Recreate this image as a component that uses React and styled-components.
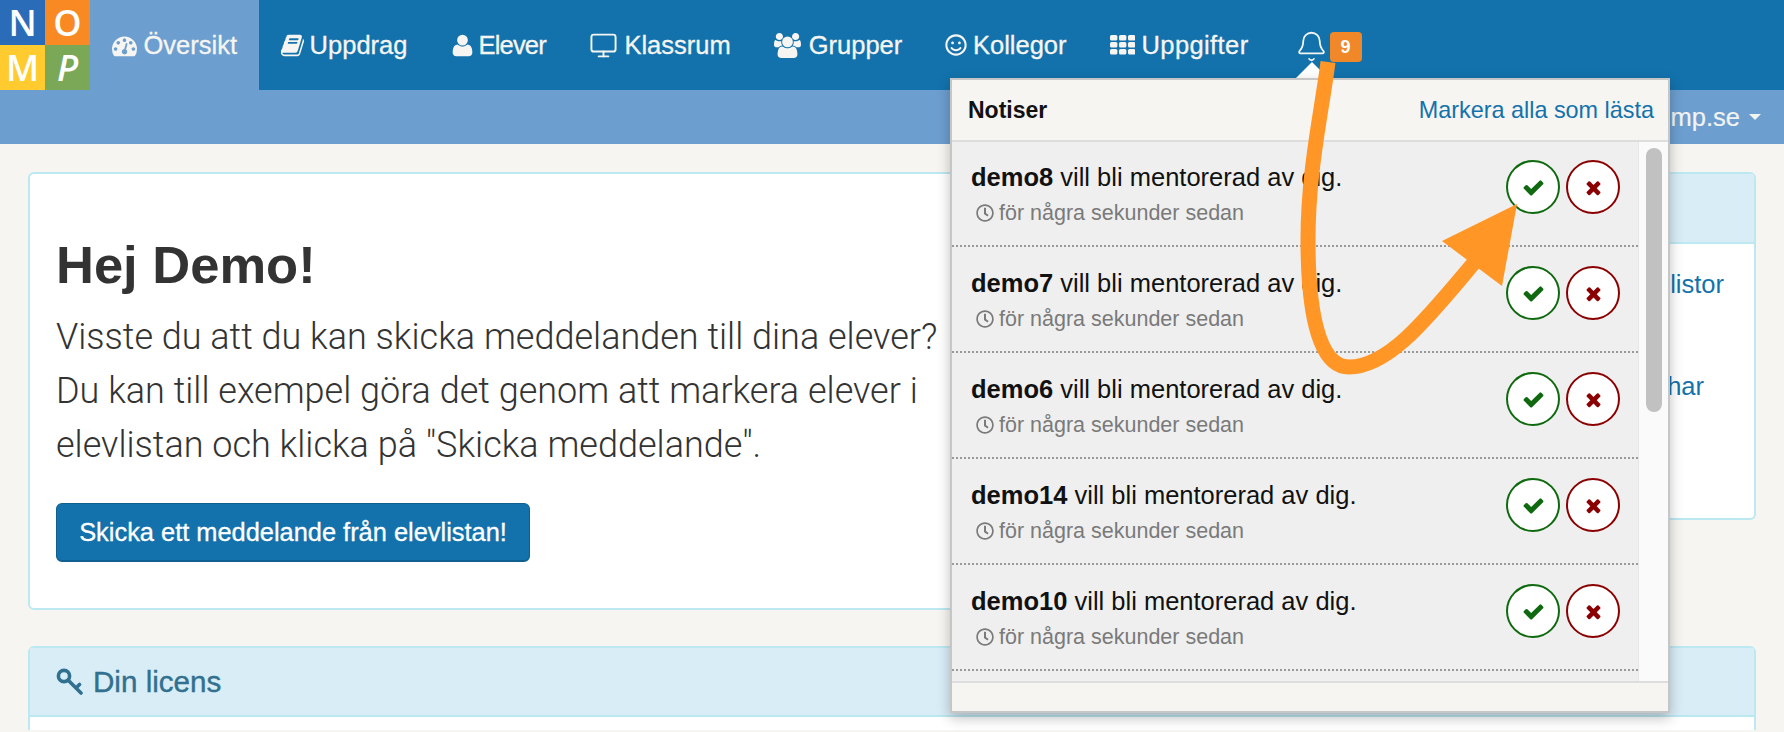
import styled, { createGlobalStyle } from 'styled-components';
import { FaRegSmile, FaRegClock } from 'react-icons/fa';
import { Monitor, Bell } from 'lucide-react';

const GlobalStyle = createGlobalStyle`
    html, body {
        margin: 0;
        height: 732px;
        overflow: hidden;
    }
    body {
        background: #f6f5f1;
        font-family: "Liberation Sans", Arial, sans-serif;
        color: #333;
    }
`;

const paths = {
    dashboard: 'M384 1152q0-53-37.5-90.5t-90.5-37.5-90.5 37.5-37.5 90.5 37.5 90.5 90.5 37.5 90.5-37.5 37.5-90.5zm192-448q0-53-37.5-90.5t-90.5-37.5-90.5 37.5-37.5 90.5 37.5 90.5 90.5 37.5 90.5-37.5 37.5-90.5zm428 481l101-382q6-26-7.5-48.5t-38.5-29.5-48 6.5-30 39.5l-101 382q-60 5-107 43.5t-63 98.5q-20 77 20 146t117 89 146-20 89-117q16-60-6-117t-72-91zm660-33q0-53-37.5-90.5t-90.5-37.5-90.5 37.5-37.5 90.5 37.5 90.5 90.5 37.5 90.5-37.5 37.5-90.5zm-640-640q0-53-37.5-90.5t-90.5-37.5-90.5 37.5-37.5 90.5 37.5 90.5 90.5 37.5 90.5-37.5 37.5-90.5zm448 192q0-53-37.5-90.5t-90.5-37.5-90.5 37.5-37.5 90.5 37.5 90.5 90.5 37.5 90.5-37.5 37.5-90.5zm320 448q0 261-141 483-19 29-54 29h-1402q-35 0-54-29-141-221-141-483 0-182 71-348t191-286 286-191 348-71 348 71 286 191 191 286 71 348z',
    book: 'M1703 478q40 57 18 129l-275 906q-19 64-76.5 107.5t-122.5 43.5h-923q-77 0-148.5-53.5t-99.5-131.5q-24-67-2-127 0-4 3-27t4-37q1-8-3-21.5t-3-19.5q2-11 8-21t16.5-23.5 16.5-23.5q23-38 45-91.5t30-91.5q3-10 .5-30t-.5-28q3-11 17-28t17-23q21-36 42-92t25-90q1-9-2.5-32t.5-28q4-13 22-30.5t22-22.5q19-26 42.5-84.5t27.5-96.5q1-8-3-25.5t-2-26.5q2-8 9-18t18-23 17-21q8-12 16.5-30.5t15-35 16-36 19.5-32 26.5-23.5 36-11.5 47.5 5.5l-1 3q38-9 51-9h761q74 0 114 56t18 130l-274 906q-36 119-71.5 153.5t-128.5 34.5h-869q-27 0-38 15-11 16-1 43 24 70 144 70h923q29 0 56-15.5t35-41.5l300-987q7-22 5-57 38 15 59 43zm-1064 2q-4 13 2 22.5t20 9.5h608q13 0 25.5-9.5t16.5-22.5l21-64q4-13-2-22.5t-20-9.5h-608q-13 0-25.5 9.5t-16.5 22.5zm-83 256q-4 13 2 22.5t20 9.5h608q13 0 25.5-9.5t16.5-22.5l21-64q4-13-2-22.5t-20-9.5h-608q-13 0-25.5 9.5t-16.5 22.5z',
    user: 'M1600 1405q0 120-73 189.5t-194 69.5h-874q-121 0-194-69.5t-73-189.5q0-53 3.5-103.5t14-109 26.5-108.5 43-97.5 62-81 85.5-53.5 111.5-20q9 0 42 21.5t74.5 48 108 48 133.5 21.5 133.5-21.5 108-48 74.5-48 42-21.5q61 0 111.5 20t85.5 53.5 62 81 43 97.5 26.5 108.5 14 109 3.5 103.5zm-320-893q0 159-112.5 271.5t-271.5 112.5-271.5-112.5-112.5-271.5 112.5-271.5 271.5-112.5 271.5 112.5 112.5 271.5z',
    users: 'M593 896q-162 5-265 128h-134q-82 0-138-40.5t-56-118.5q0-353 124-353 6 0 43.5 21t97.5 42.5 119 21.5q67 0 133-23-5 37-5 66 0 139 81 256zm1071 637q0 120-73 189.5t-194 69.5h-874q-121 0-194-69.5t-73-189.5q0-53 3.5-103.5t14-109 26.5-108.5 43-97.5 62-81 85.5-53.5 111.5-20q10 0 43 21.5t73 48 107 48 135 21.5 135-21.5 107-48 73-48 43-21.5q61 0 111.5 20t85.5 53.5 62 81 43 97.5 26.5 108.5 14 109 3.5 103.5zm-1024-1277q0 106-75 181t-181 75-181-75-75-181 75-181 181-75 181 75 75 181zm704 384q0 159-112.5 271.5t-271.5 112.5-271.5-112.5-112.5-271.5 112.5-271.5 271.5-112.5 271.5 112.5 112.5 271.5zm576 225q0 78-56 118.5t-138 40.5h-134q-103-123-265-128 81-117 81-256 0-29-5-66 66 23 133 23 59 0 119-21.5t97.5-42.5 43.5-21q124 0 124 353zm-128-609q0 106-75 181t-181 75-181-75-75-181 75-181 181-75 181 75 75 181z',
    check: 'M1671 566q0 40-28 68l-724 724-136 136q-28 28-68 28t-68-28l-136-136-362-362q-28-28-28-68t28-68l136-136q28-28 68-28t68 28l294 295 656-657q28-28 68-28t68 28l136 136q28 28 28 68z',
    times: 'M1490 1322q0 40-28 68l-136 136q-28 28-68 28t-68-28l-294-294-294 294q-28 28-68 28t-68-28l-136-136q-28-28-28-68t28-68l294-294-294-294q-28-28-28-68t28-68l136-136q28-28 68-28t68 28l294 294 294-294q28-28 68-28t68 28l136 136q28 28 28 68t-28 68l-294 294 294 294q28 28 28 68z',
};

function FaPath({ name, size, wide }) {
    return (
        <svg width={size} height={size} viewBox={wide ? '0 0 1920 1792' : '0 0 1792 1792'} fill="currentColor">
            <path d={paths[name]} />
        </svg>
    );
}

function GridIcon() {
    const cells = [];
    for (let row = 0; row < 3; row++) {
        for (let col = 0; col < 3; col++) {
            cells.push(<rect key={`${row}-${col}`} x={col * 9} y={row * 7} width="7.4" height="5.6" rx="1.6" />);
        }
    }
    return (
        <svg width="25.4" height="19.6" viewBox="0 0 25.4 19.6" fill="currentColor">{cells}</svg>
    );
}

function KeyIcon() {
    return (
        <svg width="27" height="27" viewBox="0 0 27 27" fill="none" stroke="currentColor" strokeWidth="3.6" strokeLinecap="round">
            <circle cx="8" cy="8" r="5.6" />
            <path d="M12 12 L25 25 M20 20 L23.5 16.5" />
        </svg>
    );
}

const navItems = [
    { label: 'Översikt', icon: <FaPath name="dashboard" size={25} />, gap: 7, active: true },
    { label: 'Uppdrag', icon: <FaPath name="book" size={25} />, gap: 4.6 },
    { label: 'Elever', icon: <FaPath name="user" size={25} />, gap: 3, track: -0.8 },
    { label: 'Klassrum', icon: <Monitor size={29} strokeWidth={1.6} />, gap: 6.5 },
    { label: 'Grupper', icon: <FaPath name="users" size={27} wide />, gap: 8 },
    { label: 'Kollegor', icon: <FaRegSmile size={22} />, gap: 5.7 },
    { label: 'Uppgifter', icon: <GridIcon />, gap: 6.6, track: 0.4 },
];

const notices = ['demo8', 'demo7', 'demo6', 'demo14', 'demo10'];

function App() {
    return (
        <>
            <GlobalStyle />
            <TopBar>
                <Logo>
                    <LogoCell $bg="#2b6cb8">N</LogoCell>
                    <LogoCell $bg="#f98a23">O</LogoCell>
                    <LogoCell $bg="#ffcb2e">M</LogoCell>
                    <LogoCell $bg="#7aa857" $italic>P</LogoCell>
                </Logo>
                {navItems.map((item) => (
                    <NavItem key={item.label} $active={item.active} $gap={item.gap} $track={item.track}>
                        {item.icon}
                        {item.label}
                    </NavItem>
                ))}
                <BellItem>
                    <Bell size={33} strokeWidth={1.3} />
                    <Badge>9</Badge>
                </BellItem>
            </TopBar>
            <SubBar>
                <UserName>mp.se</UserName>
                <Caret />
            </SubBar>
            <Main>
                <Columns>
                    <Hero>
                        <HeroTitle>Hej Demo!</HeroTitle>
                        <HeroText>
                            Visste du att du kan skicka meddelanden till dina elever?<br />
                            Du kan till exempel göra det genom att markera elever i<br />
                            elevlistan och klicka på "Skicka meddelande".
                        </HeroText>
                        <PrimaryButton>Skicka ett meddelande från elevlistan!</PrimaryButton>
                    </Hero>
                    <SidePanel>
                        <PanelHead />
                        <SideBody>
                            <SideLink $right={30}>listor</SideLink>
                            <SideLink $right={50}>har</SideLink>
                        </SideBody>
                    </SidePanel>
                </Columns>
                <LicensePanel>
                    <LicenseHead>
                        <KeyIcon />
                        Din licens
                    </LicenseHead>
                </LicensePanel>
            </Main>

            <Popover>
                <PopHead>
                    <PopTitle>Notiser</PopTitle>
                    <MarkAll>Markera alla som lästa</MarkAll>
                </PopHead>
                <PopBody>
                    <NoticeList>
                        {notices.map((name) => (
                            <Notice key={name}>
                                <NoticeCopy>
                                    <NoticeText><b>{name}</b> vill bli mentorerad av dig.</NoticeText>
                                    <NoticeTime>
                                        <FaRegClock size={18} />
                                        för några sekunder sedan
                                    </NoticeTime>
                                </NoticeCopy>
                                <Actions>
                                    <RoundButton $color="#0f6a0f"><FaPath name="check" size={23} /></RoundButton>
                                    <RoundButton $color="#8b0000"><FaPath name="times" size={21} /></RoundButton>
                                </Actions>
                            </Notice>
                        ))}
                    </NoticeList>
                    <ScrollTrack>
                        <ScrollThumb />
                    </ScrollTrack>
                </PopBody>
                <PopFoot />
            </Popover>

            <ArrowOverlay viewBox="0 0 1784 732" width="1784" height="732">
                <path
                    d="M1328 62 C1322 110 1308 170 1308 240 C1308 310 1318 367 1349 367 C1390 367 1430 315 1478 258"
                    fill="none"
                    stroke="#ff9626"
                    strokeWidth="15"
                />
                <polygon points="1517,204 1442,241 1502,286" fill="#ff9626" />
            </ArrowOverlay>
        </>
    );
}

const TopBar = styled.header`
    display: flex;
    height: 90px;
    background: #1372ac;
`;

const Logo = styled.div`
    display: grid;
    grid-template-columns: 45px 45px;
    grid-template-rows: 45px 45px;
    flex-shrink: 0;
`;

const LogoCell = styled.div`
    display: flex;
    align-items: center;
    justify-content: center;
    background: ${(p) => p.$bg};
    color: #fff;
    font-family: "Open Sans", sans-serif;
    font-weight: 600;
    font-size: 36px;
    font-style: ${(p) => (p.$italic ? 'italic' : 'normal')};
`;

const NavItem = styled.a`
    display: flex;
    align-items: center;
    gap: ${(p) => p.$gap}px;
    height: 90px;
    padding: 0 21.5px;
    background: ${(p) => (p.$active ? '#6c9ecf' : 'transparent')};
    color: #f6f5f1;
    font-size: 25.5px;
    letter-spacing: ${(p) => p.$track || 0}px;
    -webkit-text-stroke: 0.3px #f6f5f1;
`;

const BellItem = styled.div`
    position: relative;
    display: flex;
    gap: 2px;
    align-items: flex-start;
    margin-left: 24.5px;
    padding-top: 30px;
    color: #f6f5f1;

    &::after {
        content: '';
        position: absolute;
        left: 0;
        top: 62px;
        border-left: 17px solid transparent;
        border-right: 17px solid transparent;
        border-bottom: 17px solid #fff;
    }
`;

const Badge = styled.span`
    width: 32px;
    height: 30px;
    margin-top: 2px;
    border-radius: 4px;
    background: #f0882a;
    color: #fff;
    font-size: 18px;
    font-weight: 700;
    line-height: 30px;
    text-align: center;
`;

const SubBar = styled.div`
    display: flex;
    align-items: center;
    justify-content: flex-end;
    gap: 9px;
    height: 54px;
    padding-right: 23px;
    background: #6c9ecf;
`;

const UserName = styled.span`
    color: #f3f3f0;
    font-size: 25.5px;
    -webkit-text-stroke: 0.2px #f3f3f0;
`;

const Caret = styled.span`
    border-left: 6px solid transparent;
    border-right: 6px solid transparent;
    border-top: 6px solid #f3f3f0;
`;

const Main = styled.main`
    padding: 28px 28px 0;
`;

const Columns = styled.div`
    display: grid;
    grid-template-columns: 1081px 1fr;
    gap: 28px;
    align-items: start;
`;

const Hero = styled.section`
    padding: 59px 26px 46px;
    background: #fff;
    border: 2px solid #bce8f1;
    border-radius: 6px;
`;

const HeroTitle = styled.h1`
    margin: 0 0 13px;
    color: #333;
    font-size: 52.5px;
    font-weight: 700;
    line-height: 64px;
`;

const HeroText = styled.p`
    margin: 0 0 31px;
    color: #333;
    font-family: Roboto, "Liberation Sans", sans-serif;
    font-size: 36px;
    font-weight: 300;
    line-height: 54px;
`;

const PrimaryButton = styled.button`
    display: block;
    height: 59px;
    width: 474px;
    padding: 0;
    background: #1372ac;
    border: 1px solid #0f5f90;
    border-bottom-width: 2px;
    border-radius: 6px;
    color: #fff;
    font-family: inherit;
    font-size: 25.4px;
    -webkit-text-stroke: 0.3px #fff;
    text-align: center;
`;

const SidePanel = styled.aside`
    height: 348px;
    box-sizing: border-box;
    background: #fff;
    border: 2px solid #bce8f1;
    border-radius: 6px;
`;

const PanelHead = styled.div`
    height: 68px;
    background: #d9edf7;
    border-bottom: 2px solid #bce8f1;
`;

const SideBody = styled.div`
    display: flex;
    flex-direction: column;
    align-items: flex-end;
    gap: 70px;
    padding-top: 24px;
`;

const SideLink = styled.a`
    margin-right: ${(p) => p.$right}px;
    color: #1372ac;
    font-size: 25.5px;
    line-height: 32px;
`;

const LicensePanel = styled.section`
    margin-top: 36px;
    height: 84px;
    box-sizing: border-box;
    background: #fff;
    border: 2px solid #bce8f1;
    border-bottom: 0;
    border-radius: 6px 6px 0 0;
`;

const LicenseHead = styled.h2`
    display: flex;
    align-items: center;
    gap: 10px;
    height: 67px;
    margin: 0;
    padding-left: 26px;
    background: #d9edf7;
    border-bottom: 2px solid #bce8f1;
    color: #31708f;
    font-size: 29.6px;
    font-weight: 400;
    -webkit-text-stroke: 0.4px #31708f;
`;

const Popover = styled.div`
    position: absolute;
    top: 78px;
    left: 950px;
    display: flex;
    flex-direction: column;
    width: 720px;
    height: 635px;
    box-sizing: border-box;
    background: #f6f5f1;
    border: 2px solid #c6c6c6;
    box-shadow: 0 5px 12px rgba(0, 0, 0, 0.25);
`;

const PopHead = styled.div`
    display: flex;
    align-items: center;
    justify-content: space-between;
    flex-shrink: 0;
    height: 60px;
    padding: 0 14px 0 16px;
    border-bottom: 2px solid #dddddd;
`;

const PopTitle = styled.span`
    color: #111;
    font-size: 23px;
    font-weight: 700;
`;

const MarkAll = styled.a`
    color: #1372ac;
    font-size: 23.4px;
`;

const PopBody = styled.div`
    display: flex;
    flex: 1;
    min-height: 0;
    overflow: hidden;
`;

const NoticeList = styled.div`
    flex: 1;
    margin-top: -1px;
    background: #efefef;
`;

const Notice = styled.div`
    display: flex;
    align-items: flex-start;
    justify-content: space-between;
    height: 106px;
    box-sizing: border-box;
    padding: 19px 18px 0 19px;
    border-bottom: 2px dotted #999;
`;

const NoticeCopy = styled.div`
    padding-top: 2px;
`;

const NoticeText = styled.div`
    color: #111;
    font-size: 25.5px;
    line-height: 30px;
`;

const NoticeTime = styled.div`
    display: flex;
    align-items: center;
    gap: 5px;
    margin: 7px 0 0 5px;
    color: #7a7a7a;
    font-size: 21.5px;
    line-height: 28px;
`;

const Actions = styled.div`
    display: flex;
    gap: 6px;
`;

const RoundButton = styled.button`
    display: flex;
    align-items: center;
    justify-content: center;
    width: 54px;
    height: 54px;
    padding: 0;
    background: #fff;
    border: 2px solid ${(p) => p.$color};
    border-radius: 50%;
    color: ${(p) => p.$color};
`;

const ScrollTrack = styled.div`
    flex-shrink: 0;
    width: 30px;
    padding: 6px 0 0 7px;
    box-sizing: border-box;
    background: #fafafa;
    border-left: 1px solid #e6e6e6;
`;

const ScrollThumb = styled.div`
    width: 16px;
    height: 264px;
    border-radius: 8px;
    background: #c1c1c1;
`;

const PopFoot = styled.div`
    flex-shrink: 0;
    height: 28px;
    border-top: 2px solid #dddddd;
`;

const ArrowOverlay = styled.svg`
    position: absolute;
    top: 0;
    left: 0;
    pointer-events: none;
`;

export default App;
